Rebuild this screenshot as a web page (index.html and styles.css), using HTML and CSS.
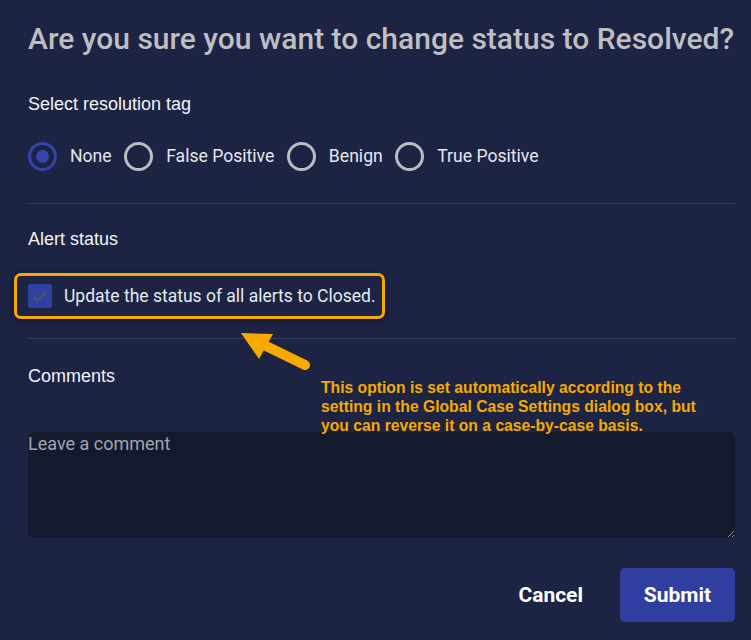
FILE: index.html
```html
<!DOCTYPE html>
<html lang="en">
<head>
    <meta charset="UTF-8">
    <meta name="viewport" content="width=device-width, initial-scale=1.0">
    <title>Change status</title>
    <link rel="stylesheet" href="styles.css">
</head>
<body>

    <div class="dialog">
        <h1 class="dialog-title">Are you sure you want to change status to Resolved?</h1>

        <h2 class="field-label first">Select resolution tag</h2>
        <div class="radio-group">
            <label class="radio-item">
                <span class="radio checked"></span>
                <span>None</span>
            </label>
            <label class="radio-item">
                <span class="radio"></span>
                <span>False Positive</span>
            </label>
            <label class="radio-item">
                <span class="radio"></span>
                <span>Benign</span>
            </label>
            <label class="radio-item">
                <span class="radio"></span>
                <span>True Positive</span>
            </label>
        </div>

        <hr class="divider">

        <h2 class="field-label">Alert status</h2>
        <label class="alert-option">
            <span class="checkbox">
                <svg width="24" height="24" viewBox="0 0 24 24"><polyline points="6,12.5 10,16.5 18,8" fill="none" stroke="#4f5266" stroke-width="2.6"/></svg>
            </span>
            <span>Update the status of all alerts to Closed.</span>
        </label>

        <hr class="divider second">

        <h2 class="field-label">Comments</h2>
        <textarea class="comment" placeholder="Leave a comment"></textarea>

        <div class="actions">
            <button class="btn-cancel">Cancel</button>
            <button class="btn-submit">Submit</button>
        </div>
    </div>

    <!-- callout drawn over the dialog -->
    <svg class="callout-arrow" width="80" height="50" viewBox="230 325 80 50">
        <line x1="264" y1="345" x2="305" y2="365" stroke="#f6aa00" stroke-width="10" stroke-linecap="round"/>
        <polygon points="241,333 273,334 259,359" fill="#f6aa00"/>
    </svg>
    <p class="callout-note">This option is set automatically according to the setting in the Global Case Settings dialog box, but you can reverse it on a case-by-case basis.</p>

</body>
</html>
```

FILE: styles.css
```css
body {
    margin: 0;
    background-color: #1c2343;
    color: #eceef3;
    font-family: Roboto, "Liberation Sans", sans-serif;
    position: relative;
    min-height: 640px;
}
.dialog {
    padding: 21px 16px 0 28px;
}
.dialog-title {
    margin: 0;
    font-size: 30px;
    line-height: 36px;
    font-weight: 500;
    color: #bfbfc2;
    white-space: nowrap;
}
.field-label {
    margin: 0;
    font-family: "Liberation Sans", Arial, sans-serif;
    font-size: 18px;
    line-height: 24px;
    font-weight: normal;
    color: #f2f3f6;
}
.field-label.first {
    margin-top: 35px;
}
.radio-group {
    display: flex;
    align-items: center;
    gap: 12.5px;
    margin-top: 26px;
}
.radio-item {
    display: flex;
    align-items: center;
    gap: 13px;
    font-size: 17.6px;
    line-height: 29px;
    color: #e6e8ee;
}
.radio {
    width: 29px;
    height: 29px;
    box-sizing: border-box;
    border: 3px solid #bcbdc3;
    border-radius: 50%;
    display: flex;
    align-items: center;
    justify-content: center;
}
.radio.checked {
    border-color: #3345a9;
}
.radio.checked::after {
    content: "";
    width: 13px;
    height: 13px;
    border-radius: 50%;
    background-color: #3446ad;
}
.divider {
    border: 0;
    border-top: 1px solid #343c5b;
    margin: 32px 0 23px;
}
.divider.second {
    margin: 19px 0 25px;
}
.alert-option {
    display: inline-flex;
    align-items: center;
    gap: 12px;
    margin: 22px 0 0 -14px;
    padding: 8px 6px 8px 11px;
    border: 3px solid #f6aa00;
    border-radius: 7px;
    font-size: 17.5px;
    line-height: 24px;
    color: #e8eaf0;
    box-shadow: 0 2px 6px rgba(0, 0, 0, 0.35);
}
.checkbox {
    width: 24px;
    height: 24px;
    border-radius: 3px;
    background-color: #3141a3;
    display: block;
}
.checkbox svg {
    display: block;
}
.comment {
    display: block;
    box-sizing: border-box;
    width: 100%;
    height: 106px;
    margin-top: 44px;
    padding: 1px 0;
    border: 0;
    border-radius: 6px;
    background-color: #131a2d;
    color: #e8eaf0;
    font-family: Roboto, sans-serif;
    font-size: 18px;
    outline: none;
}
.comment::placeholder {
    color: #a2a5b0;
}
.actions {
    display: flex;
    justify-content: flex-end;
    align-items: center;
    gap: 37px;
    margin-top: 30px;
}
.actions button {
    font-family: Roboto, sans-serif;
    font-size: 21px;
    font-weight: bold;
    color: #ffffff;
    border: 0;
    cursor: pointer;
}
.btn-cancel {
    background: none;
    padding: 0;
}
.btn-submit {
    width: 115px;
    height: 54px;
    border-radius: 5px;
    background-color: #303f9f;
}
.callout-arrow {
    position: absolute;
    left: 230px;
    top: 325px;
}
.callout-note {
    position: absolute;
    left: 321px;
    top: 378px;
    width: 385px;
    margin: 0;
    font-family: "Liberation Sans", Arial, sans-serif;
    font-size: 15.7px;
    line-height: 19px;
    font-weight: bold;
    color: #f6aa00;
}
```
